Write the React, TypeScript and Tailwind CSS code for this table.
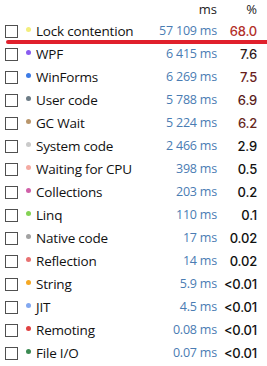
const rows = [
  { name: 'Lock contention', dot: 'bg-[#f3ee7c]', ms: '57 109 ms', pct: '68.0', pc: 'text-[#b3302a]' },
  { name: 'WPF', dot: 'bg-[#8a5cf0]', ms: '6 415 ms', pct: '7.6', pc: 'text-[#2e1a1a]' },
  { name: 'WinForms', dot: 'bg-[#3c7be6]', ms: '6 269 ms', pct: '7.5', pc: 'text-[#6a1c1c]' },
  { name: 'User code', dot: 'bg-[#6d7c86]', ms: '5 788 ms', pct: '6.9', pc: 'text-[#5a1d1d]' },
  { name: 'GC Wait', dot: 'bg-[#b9966b]', ms: '5 224 ms', pct: '6.2', pc: 'text-[#67281c]' },
  { name: 'System code', dot: 'bg-[#cacaca]', ms: '2 466 ms', pct: '2.9', pc: 'text-[#111]' },
  { name: 'Waiting for CPU', dot: 'bg-[#f4aaa2]', ms: '398 ms', pct: '0.5', pc: 'text-[#111]' },
  { name: 'Collections', dot: 'bg-[#d060a8]', ms: '203 ms', pct: '0.2', pc: 'text-[#111]' },
  { name: 'Linq', dot: 'bg-[#84d254]', ms: '110 ms', pct: '0.1', pc: 'text-[#111]' },
  { name: 'Native code', dot: 'bg-[#a2a2a2]', ms: '17 ms', pct: '0.02', pc: 'text-[#111]' },
  { name: 'Reflection', dot: 'bg-[#e87272]', ms: '14 ms', pct: '0.02', pc: 'text-[#111]' },
  { name: 'String', dot: 'bg-[#f5a823]', ms: '5.9 ms', pct: '<0.01', pc: 'text-[#111]' },
  { name: 'JIT', dot: 'bg-[#82a8f0]', ms: '4.5 ms', pct: '<0.01', pc: 'text-[#111]' },
  { name: 'Remoting', dot: 'bg-[#e04242]', ms: '0.08 ms', pct: '<0.01', pc: 'text-[#111]' },
  { name: 'File I/O', dot: 'bg-[#3b8a52]', ms: '0.07 ms', pct: '<0.01', pc: 'text-[#111]' },
]

export default function App() {
  return (
    <div className="relative w-[267px] h-[366px] bg-white overflow-hidden text-[14px] text-[#111] font-['Open_Sans',sans-serif]">
      {/* header */}
      <div className="flex h-[20px] items-center">
        <div className="flex-1" />
        <div className="w-[80px] text-right text-[13px] text-[#222]">ms</div>
        <div className="w-[50px] pr-[10px] text-right text-[13px] text-[#222]">%</div>
      </div>

      {rows.map((r) => (
        <div key={r.name} className="flex h-[23px] items-center">
          <div className="ml-[5px] w-[13px] h-[13px] border border-[#505050] bg-white shrink-0" />
          <div className={`ml-[8px] w-[5px] h-[5px] rounded-full shrink-0 -translate-y-[2px] ${r.dot}`} />
          <div className="ml-[5px] flex-1 whitespace-nowrap text-[13.5px] tracking-[-0.2px]">{r.name}</div>
          <div className="w-[80px] text-right text-[12.5px] tracking-[-0.2px] text-[#4a7cb3] whitespace-nowrap">{r.ms}</div>
          <div className={`w-[50px] pr-[10px] text-right text-[13px] font-['Inter',sans-serif] font-medium tracking-[-0.2px] whitespace-nowrap ${r.pc}`}>{r.pct}</div>
        </div>
      ))}

      {/* red underline annotation */}
      <div className="absolute left-[6px] right-[-4px] top-[40px] h-[4px] rounded-full bg-[#e0202c]" />
    </div>
  )
}
